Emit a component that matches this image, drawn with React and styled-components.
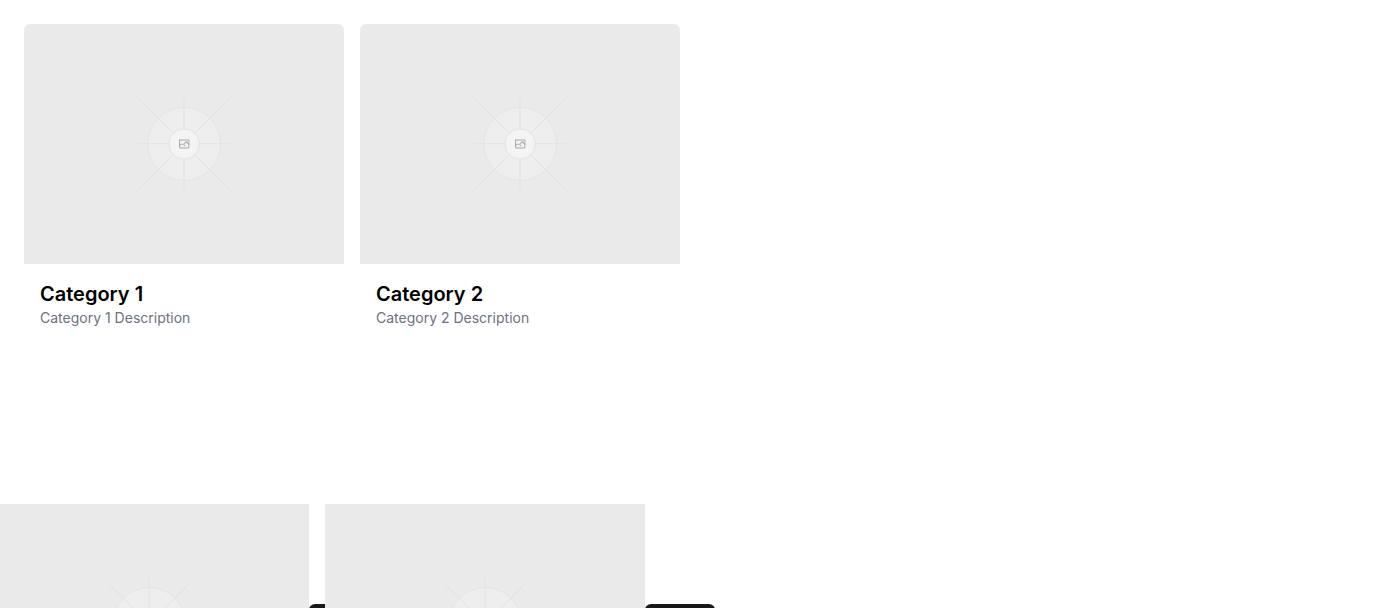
import React, { useId } from "react";
import styled, { createGlobalStyle } from "styled-components";

const GlobalStyle = createGlobalStyle`
  *, *::before, *::after { box-sizing: border-box; }
  body {
    margin: 0;
    background: #ffffff;
    color: #09090b;
    font-family: Inter, "Liberation Sans", sans-serif;
  }
`;

const Page = styled.main`
  display: flex;
  flex-direction: column;
  gap: 160px;
  height: 100vh;
  padding: 24px;
  overflow: hidden;
`;

const CardRow = styled.section`
  display: flex;
  flex-shrink: 0;
  gap: 16px;
`;

const CategoryCard = styled.article`
  flex: 0 0 320px;
  border-radius: 6px;
  overflow: hidden;
`;

const ProductCard = styled.article`
  display: flex;
  flex: 0 0 320px;
  align-items: center;
  justify-content: center;
  min-width: 0;
`;

const Picture = styled.svg`
  display: block;
  flex-shrink: 0;
  width: 320px;
  aspect-ratio: 4 / 3;
  background: #eaeaea;
`;

const CardBody = styled.div`
  padding: 16px;
`;

const CardTitle = styled.h2`
  margin: 0;
  color: #000000;
  font-size: 20px;
  font-weight: 600;
  line-height: 28px;
`;

const CardText = styled.p`
  margin: 0;
  color: #6b7280;
  font-size: 14px;
  line-height: 20px;
`;

const ActionButton = styled.button`
  flex: 0 0 70px;
  height: 40px;
  padding: 0;
  border: 0;
  border-radius: 6px;
  background: #18181b;
  color: #fafafa;
`;

function Fade({ id, x1, y1, x2, y2 }) {
  return (
    <linearGradient id={id} x1={x1} y1={y1} x2={x2} y2={y2} gradientUnits="userSpaceOnUse">
      <stop stopColor="#C9C9C9" stopOpacity="0" />
      <stop offset=".208" stopColor="#C9C9C9" />
      <stop offset=".792" stopColor="#C9C9C9" />
      <stop offset="1" stopColor="#C9C9C9" stopOpacity="0" />
    </linearGradient>
  );
}

const rays = [
  { x1: 404, y1: 599, x2: 796, y2: 599 },
  { x1: 600, y1: 404, x2: 600, y2: 796 },
  { x1: 404, y1: 404, x2: 796, y2: 796 },
  { x1: 796, y1: 404, x2: 404, y2: 796 },
];

function Placeholder({ label }) {
  const id = useId();
  return (
    <Picture viewBox="0 0 1200 1200" preserveAspectRatio="xMidYMid slice" fill="none" role="img" aria-label={label}>
      <defs>
        {rays.map((ray, i) => (
          <Fade key={i} id={`${id}-${i}`} {...ray} />
        ))}
      </defs>
      <g opacity=".5">
        <circle cx="600.7" cy="599.9" r="136.6" fill="#FAFAFA" stroke="#C9C9C9" strokeWidth="2.418" opacity=".5" />
        {rays.map((ray, i) => (
          <line key={i} {...ray} stroke={`url(#${id}-${i})`} strokeWidth="2.418" />
        ))}
        <circle cx="600.7" cy="599.9" r="56.6" fill="#ffffff" />
        <path
          fill="#666"
          fillRule="evenodd"
          clipRule="evenodd"
          d="M616.426 586.58h-31.434v16.176l3.553-3.554.531-.531h9.068l.074-.074 8.463-8.463h2.565l7.18 7.181V586.58Zm-15.715 14.654 3.698 3.699 1.283 1.282-2.565 2.565-1.282-1.283-5.2-5.199h-6.066l-5.514 5.514-.073.073v2.876a2.418 2.418 0 0 0 2.418 2.418h26.598a2.418 2.418 0 0 0 2.418-2.418v-8.317l-8.463-8.463-7.181 7.181-.071.072Zm-19.347 5.442v4.085a6.045 6.045 0 0 0 6.046 6.045h26.598a6.044 6.044 0 0 0 6.045-6.045v-7.108l1.356-1.355-1.282-1.283-.074-.073v-17.989h-38.689v23.43l-.146.146.146.147Z"
        />
        <circle cx="600.7" cy="599.9" r="56.6" stroke="#C9C9C9" strokeWidth="2.418" />
      </g>
    </Picture>
  );
}

const categories = ["Category 1", "Category 2"];
const products = ["Product 1", "Product 2"];

export default function App() {
  return (
    <>
      <GlobalStyle />
      <Page>
        <CardRow>
          {categories.map((name) => (
            <CategoryCard key={name}>
              <Placeholder label={name} />
              <CardBody>
                <CardTitle>{name}</CardTitle>
                <CardText>{name} Description</CardText>
              </CardBody>
            </CategoryCard>
          ))}
        </CardRow>
        <CardRow>
          {products.map((name) => (
            <ProductCard key={name}>
              <Placeholder label={name} />
              <ActionButton type="button" aria-label={`View ${name}`} />
            </ProductCard>
          ))}
        </CardRow>
      </Page>
    </>
  );
}
